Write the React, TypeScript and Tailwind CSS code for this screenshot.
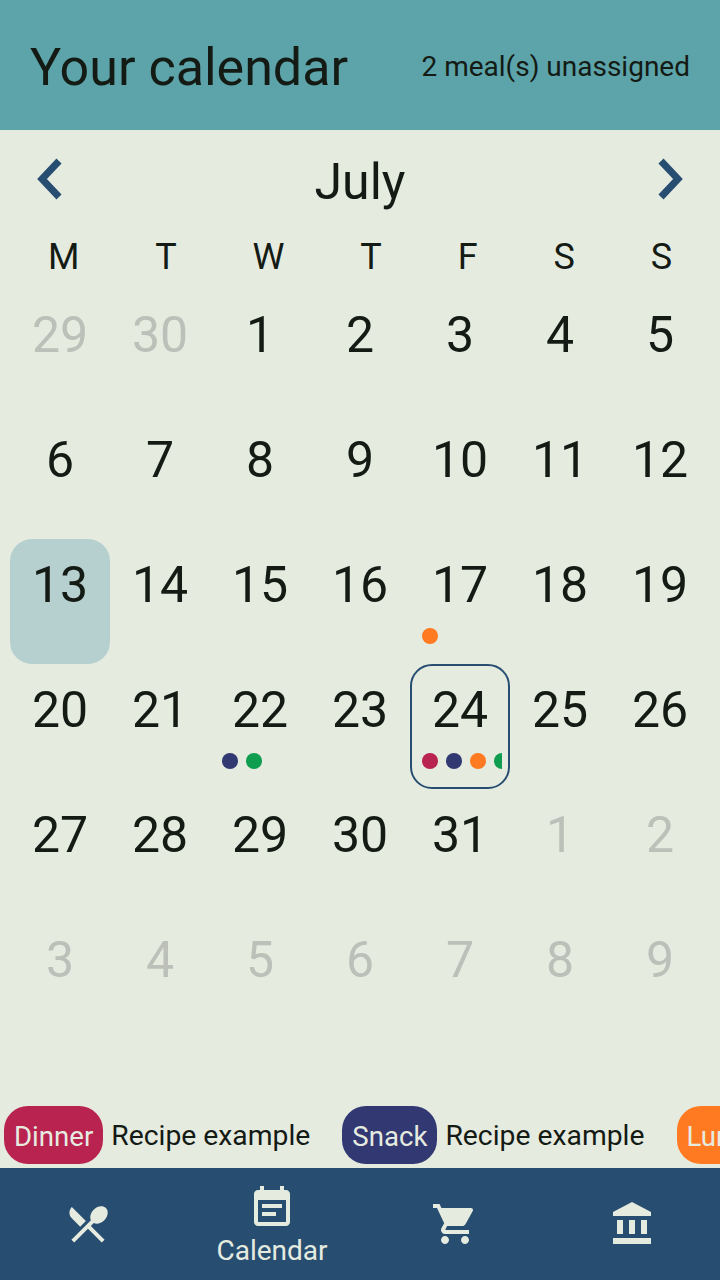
const dayRows: { label: number; muted?: boolean; today?: boolean; selected?: boolean; dots?: string[] }[][] = [
  [{ label: 29, muted: true }, { label: 30, muted: true }, { label: 1 }, { label: 2 }, { label: 3 }, { label: 4 }, { label: 5 }],
  [{ label: 6 }, { label: 7 }, { label: 8 }, { label: 9 }, { label: 10 }, { label: 11 }, { label: 12 }],
  [{ label: 13, today: true }, { label: 14 }, { label: 15 }, { label: 16 }, { label: 17, dots: ['bg-[#ff7a21]'] }, { label: 18 }, { label: 19 }],
  [
    { label: 20 },
    { label: 21 },
    { label: 22, dots: ['bg-[#313872]', 'bg-[#0f9d50]'] },
    { label: 23 },
    { label: 24, selected: true, dots: ['bg-[#b82350]', 'bg-[#313872]', 'bg-[#ff7a21]', 'bg-[#0f9d50]'] },
    { label: 25 },
    { label: 26 },
  ],
  [{ label: 27 }, { label: 28 }, { label: 29 }, { label: 30 }, { label: 31 }, { label: 1, muted: true }, { label: 2, muted: true }],
  [3, 4, 5, 6, 7, 8, 9].map((label) => ({ label, muted: true })),
];

const weekDays = ['M', 'T', 'W', 'T', 'F', 'S', 'S'];

const meals = [
  { name: 'Dinner', color: 'bg-[#b82350]' },
  { name: 'Snack', color: 'bg-[#313872]' },
  { name: 'Lunch', color: 'bg-[#ff7a21]' },
];

function Chevron({ right }: { right?: boolean }) {
  return (
    <svg width="28" height="42" viewBox="0 0 28 42" fill="none" className={`-mt-[4px] ${right ? 'rotate-180' : ''}`}>
      <path d="M23 3 L6 21 L23 39" stroke="#274e71" strokeWidth="7" />
    </svg>
  );
}

function NavIcon({ d }: { d: string }) {
  return (
    <svg width="48" height="48" viewBox="0 0 24 24" fill="#e6ebe0" fillRule="evenodd">
      <path d={d} />
    </svg>
  );
}

export default function App() {
  return (
    <div className="flex h-[1280px] w-[720px] flex-col overflow-hidden bg-[#e6ebe0] font-['Roboto',sans-serif] text-[#141a14]">
      {/* Header */}
      <div className="flex h-[130px] items-center justify-between bg-[#5ca4a9] pl-[30px] pr-[30px] pt-[5px]">
        <h1 className="text-[52px] leading-none font-normal">Your calendar</h1>
        <span className="-mt-[2px] text-[28px] leading-none">2 meal(s) unassigned</span>
      </div>

      {/* Month */}
      <div className="flex h-[101px] items-center justify-between px-[36px]">
        <Chevron />
        <span className="text-[50px] leading-none pt-[3px]">July</span>
        <Chevron right />
      </div>

      {/* Week days */}
      <div className="-mt-[2px] mb-[2px] flex h-[58px] items-start justify-around px-[10px] text-[36px] leading-[56px]">
        {weekDays.map((d, i) => (
          <span key={i}>{d}</span>
        ))}
      </div>

      {/* Days */}
      <div className="grid grid-cols-[repeat(7,100px)] auto-rows-[125px] px-[10px]">
        {dayRows.flat().map((day, i) => (
          <div
            key={i}
            className={`relative flex flex-col items-center rounded-[22px] text-[50px] leading-[56px] ${
              day.today ? 'bg-[#b5d0cf]' : ''
            } ${day.selected ? 'border-2 border-[#274e71] pt-[16px]' : 'pt-[18px]'} ${day.muted ? 'text-[#bcc0b8]' : ''}`}
          >
            {day.label}
            {day.dots && (
              <div
                className={`absolute flex w-[80px] gap-2 overflow-hidden ${
                  day.selected ? 'top-[87px] left-[10px]' : 'top-[89px] left-[12px]'
                }`}
              >
                {day.dots.map((c, j) => (
                  <span key={j} className={`h-4 w-4 shrink-0 rounded-full ${c}`} />
                ))}
              </div>
            )}
          </div>
        ))}
      </div>

      {/* Unassigned meals */}
      <div className="mt-auto mb-[4px] flex h-[58px] gap-8 overflow-hidden pl-1">
        {meals.map((m) => (
          <div key={m.name} className="flex shrink-0 items-center gap-2">
            <span className={`flex h-[58px] items-center rounded-[24px] px-[10px] pt-[3px] text-[27.6px] text-[#e6ebe0] ${m.color}`}>
              {m.name}
            </span>
            <span className="pt-[3px] text-[28.3px]">Recipe example</span>
          </div>
        ))}
      </div>

      {/* Bottom nav */}
      <div className="grid h-[112px] grid-cols-[176px_192px_174px_178px] bg-[#274e71] text-[#e6ebe0]">
        <div className="flex items-center justify-center">
          <NavIcon d="M8.1 13.34l2.83-2.83L3.91 3.5c-1.56 1.56-1.56 4.09 0 5.66l4.19 4.18zm6.78-1.81c1.53.71 3.68.21 5.27-1.38 1.91-1.91 2.28-4.65.81-6.12-1.46-1.46-4.2-1.1-6.12.81-1.59 1.59-2.09 3.74-1.38 5.27L3.7 19.87l1.41 1.41L12 14.41l6.88 6.88 1.41-1.41L13.41 13l1.47-1.47z" />
        </div>
        <div className="flex flex-col items-center pt-[14px]">
          <NavIcon d="M6 2h2v2h8V2h2v2h1c1.1 0 2 .9 2 2v14c0 1.1-.9 2-2 2H5c-1.1 0-2-.9-2-2V6c0-1.1.9-2 2-2h1V2zM5 9v11h14V9H5zM7 11h10v2H7zM7 15h7v2H7z" />
          <span className="mt-[5px] text-[28px] leading-[32px]">Calendar</span>
        </div>
        <div className="flex items-center justify-center">
          <NavIcon d="M7 18c-1.1 0-1.99.9-1.99 2S5.9 22 7 22s2-.9 2-2-.9-2-2-2zM1 2v2h2l3.6 7.59-1.35 2.45c-.16.28-.25.61-.25.96 0 1.1.9 2 2 2h12v-2H7.42c-.14 0-.25-.11-.25-.25l.03-.12.9-1.63h7.45c.75 0 1.41-.41 1.75-1.03l3.58-6.47c.08-.14.12-.31.12-.48 0-.55-.45-1-1-1H5.21l-.94-2H1zm16 16c-1.1 0-1.99.9-1.99 2s.89 2 1.99 2 2-.9 2-2-.9-2-2-2z" />
        </div>
        <div className="flex items-center justify-center pl-[4px]">
          <NavIcon d="M4 10v7h3v-7H4zm6 0v7h3v-7h-3zM2 22h19v-3H2v3zm14-12v7h3v-7h-3zm-4.5-9L2 6v2h19V6l-9.5-5z" />
        </div>
      </div>
    </div>
  );
}
